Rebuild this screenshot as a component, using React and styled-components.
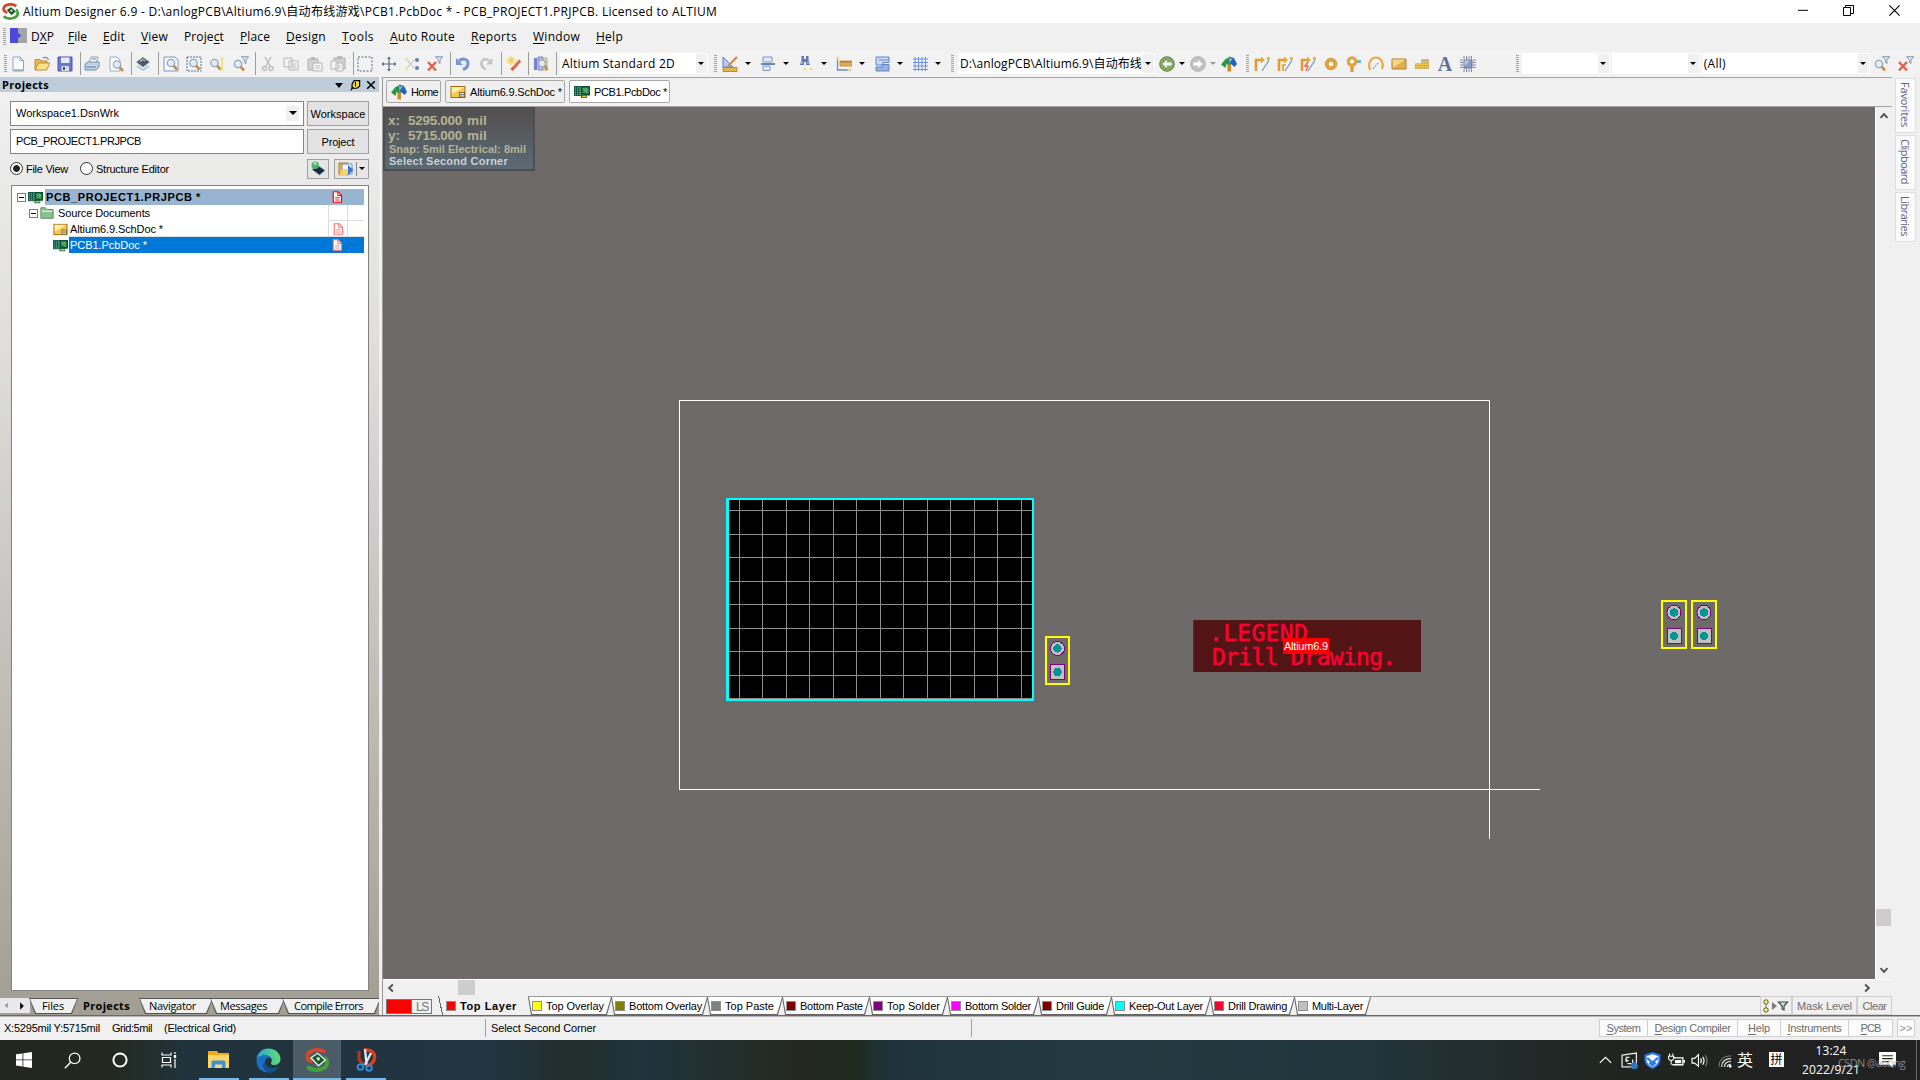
import { useLayoutEffect, useRef } from 'react'
import styled, { createGlobalStyle, css } from 'styled-components'

const ui = `'Open Sans', 'Noto Sans', 'Noto Sans CJK SC', sans-serif`
const sans = `'Liberation Sans', 'Noto Sans CJK SC', sans-serif`

const GlobalStyle = createGlobalStyle`
  * { box-sizing: border-box; }
  body { margin: 0; overflow: hidden; background: #f0f0f0; }
  svg { display: block; flex: none; }
`

// Spreads a label over the width it has in the original bitmap fonts
const Fit = ({ w, children, ...rest }) => {
  const ref = useRef(null)
  useLayoutEffect(() => {
    const el = ref.current
    el.style.letterSpacing = '0px'
    const box = el.getBoundingClientRect()
    const vertical = getComputedStyle(el).writingMode !== 'horizontal-tb'
    const natural = vertical ? box.height : box.width
    el.style.letterSpacing = `${(w - natural) / el.textContent.length}px`
  }, [w])
  return <Label ref={ref} {...rest}>{children}</Label>
}

const accel = (text) => {
  const i = text.indexOf('&')
  if (i < 0) return text
  return <>{text.slice(0, i)}<u>{text[i + 1]}</u>{text.slice(i + 2)}</>
}

/* ---------- icons ---------- */

const Ico = ({ size = 16, children, ...rest }) => (
  <svg width={size} height={size} viewBox="0 0 16 16" fill="none" {...rest}>{children}</svg>
)

const Lens = ({ x = 8, y = 8, s = 1 }) => (
  <g transform={`translate(${x} ${y}) scale(${s})`}>
    <path d="M2.8 2.8 L5.2 5.6" stroke="#d08a3c" strokeWidth="2.8" strokeLinecap="round" />
    <circle r="3.7" fill="#dceafa" stroke="#93a3bb" strokeWidth="1.2" />
    <path d="M-2 -.5 A2.2 2.2 0 0 1 .3 -2.2" stroke="#fff" />
  </g>
)

const Funnel = ({ x = 8, y = 0, stroke = '#7d92ad' }) => (
  <path transform={`translate(${x} ${y})`} d="M.5 .7 H7.6 L5 4 V7.6 L3.4 6.4 V4 Z" fill="#dbe6f2" stroke={stroke} strokeWidth=".9" />
)

const BoardIcon = (p) => (
  <Ico {...p}>
    <path d="M0 2 H16 V11.500 H13 V14 H7 V12 H0 Z" fill="#145c4a" />
    <path d="M1 4 H7 M1 6.200 H7 M1 8.400 H7 M1 10.500 H7" stroke="#7fc79a" />
    <path d="M2.500 3 V11 M4.700 3 V11" stroke="#0b3f39" strokeWidth=".8" />
    <path d="M8 3 H15 V10 H8 Z" fill="#2f8f4e" stroke="#07372f" strokeWidth=".8" />
    <path d="M9 4.500 L13.500 9 M11.500 4 L14 6.500" stroke="#9ad96c" />
    <path d="M8 12.500 H12.500" stroke="#d9d338" strokeWidth="1.600" />
  </Ico>
)

const SchIcon = (p) => (
  <Ico {...p}>
    <rect x="1" y="2.5" width="14" height="11" fill="#f7ca4d" stroke="#a46b13" />
    <path d="M1.5 3 H14 L2 10 Z" fill="#fff0a8" />
    <rect x="9.5" y="8.5" width="5" height="4.5" fill="#f8e4a0" stroke="#7a4f12" strokeWidth=".8" />
    <path d="M10 10.7 H14" stroke="#436fb8" />
  </Ico>
)

const HomeIcon = (p) => (
  <Ico {...p}>
    <path d="M6.500 5 H10 V15.500 H6.500 Z" fill="#c98a25" />
    <path d="M0 8.500 L4.500 3 L9 1 L8 9 L5.500 8 L4.500 12 Z" fill="#2e9a35" />
    <path d="M8 .5 L13 2 L16 8 L13.500 11 L10.500 8.500 L7 6 Z" fill="#2463bd" />
    <path d="M8 1.500 L12 3 L8 7 Z" fill="#6fc0a0" />
  </Ico>
)

const LogoIcon = (p) => (
  <Ico {...p}>
    <path d="M13.500 3 C9 -.5 1.500 1.800 1.500 5.500 C1.500 7.500 3 8.500 5 9" stroke="#d8462c" strokeWidth="2.600" />
    <path d="M1.500 12.500 C6 16.500 15 14.500 14.800 9.500 C14.700 8 14 7 13 6.300" stroke="#3fa33a" strokeWidth="2.600" />
    <path d="M4 6.500 L8.500 3.500 L13.500 8 L9 11.800 Z" fill="#17582b" stroke="#e6efe0" strokeWidth=".9" />
    <path d="M7.500 6.500 L9.500 6 L10 8 L8.500 8.500 Z" fill="#d5f0c5" />
  </Ico>
)

const RouteBase = () => (
  <>
    <path d="M2 15 V4 H8" stroke="#e29a31" strokeWidth="2.6" />
    <path d="M7 .5 L11 4 L7 7.500 Z" fill="#e9a83e" />
    <path d="M14.500 1 V5 L8 15" stroke="#6d95da" strokeWidth="1.200" />
    <circle cx="14.300" cy="2.500" r="1.700" fill="#eab33e" />
  </>
)

const icons = {
  new: <Ico><path d="M3 1 H10 L13.500 4.500 V15 H3 Z" fill="#fbfdff" stroke="#8fa6c2" /><path d="M10 1 V4.500 H13.500" stroke="#8fa6c2" /><path d="M4 14 H13" stroke="#6b86ab" /></Ico>,
  open: <Ico><path d="M1 14 V3.500 H6 L7 5 H13 V8" fill="#e8b957" stroke="#c58b2f" /><path d="M1 14 L4.500 7 H16 L12.500 14 Z" fill="#ffdf8c" stroke="#c58b2f" /><path d="M9 2 Q13 0 14.500 4" stroke="#5c89bd" strokeWidth="1.200" /></Ico>,
  save: <Ico><path d="M1 1 H15 V15 H1 Z" fill="#6c74d4" stroke="#4f56a8" /><path d="M4 1.500 H12.500 V7 H4 Z" fill="#e7ecfb" /><path d="M4.500 10 H12 V15 H4.500 Z" fill="#d9dce8" /><path d="M6 11 H8 V14 H6Z" fill="#4a4f87" /></Ico>,
  print: <Ico><path d="M5 7 L7 1 H14 L12 7" fill="#fff" stroke="#8aa0bd" /><path d="M1 8 L4 6 H15 V11 L12 14 H1 Z" fill="#c3d3e6" stroke="#6f8cb0" /><path d="M2 11 H12 M7.500 3 H12" stroke="#5e7fa8" /></Ico>,
  preview: <Ico><path d="M2 1 H9 L12 4 V15 H2 Z" fill="#fff" stroke="#9aaec6" /><Lens x={9} y={8.500} /></Ico>,
  chip: <Ico><path d="M2 9 L8 13 L14 9 V11 L8 15 L2 11 Z" fill="#a9c1d9" /><path d="M1.500 6 L8 1.500 L14.500 6 L8 11 Z" fill="#4a5768" stroke="#8797a9" /><path d="M5 5.500 L8 3.500 L10 5" stroke="#e5edf5" /></Ico>,
  zoomDoc: <Ico><path d="M1 1 H12 L15 4 V15 H1 Z" fill="#f5f9ff" stroke="#7f97b6" /><Lens x={8} y={7} /></Ico>,
  zoomArea: <Ico><path d="M1 1 H15 V15 H1 Z" stroke="#54719b" strokeDasharray="2 1" /><Lens x={7.500} y={7} /></Ico>,
  zoomPts: <Ico><Lens x={5.500} y={7} /><path d="M13 2 V5 M13 7 V10 M13 12 V14" stroke="#f0e38c" strokeWidth="2.400" strokeLinecap="round" /></Ico>,
  zoomFilter: <Ico><Lens x={5} y={8} /><Funnel /></Ico>,
  cut: <Ico><path d="M5 1 L10 10 M11 1 L6 10" stroke="#bdbdbd" strokeWidth="1.500" /><circle cx="4.500" cy="12.500" r="2" stroke="#bdbdbd" strokeWidth="1.400" /><circle cx="11" cy="12.500" r="2" stroke="#bdbdbd" strokeWidth="1.400" /></Ico>,
  copy: <Ico><path d="M1 2 H9 V11 H1 Z M6 5 H15 V14 H6 Z" fill="#f2f2f2" stroke="#b8b8b8" /><path d="M8 8 H13 M8 10 H13 M8 12 H13" stroke="#c4c4c4" /></Ico>,
  paste: <Ico><path d="M1 3 H11 V14 H1 Z" fill="#d2d2d2" stroke="#b4b4b4" /><path d="M4 1 H8 V4 H4 Z" fill="#b8b8b8" /><path d="M6 7 H15 V15 H6 Z" fill="#f4f4f4" stroke="#b8b8b8" /><path d="M8 10 H13 M8 12 H13" stroke="#c4c4c4" /></Ico>,
  pasteMulti: <Ico><path d="M4 2 H15 V13 H4 Z" fill="#d2d2d2" stroke="#b4b4b4" /><path d="M7 0 H12 V3 H7 Z" fill="#b8b8b8" /><path d="M1 5 H8 V13 H1 Z M6 7 H13 V15 H6 Z" fill="#f4f4f4" stroke="#b8b8b8" /><path d="M8 10 H11 M8 12 H11" stroke="#c4c4c4" /></Ico>,
  select: <Ico><path d="M1 1 H15 V15 H1 Z" stroke="#4e6690" strokeDasharray="2 1.500" /></Ico>,
  move: <Ico><path d="M8 1.500 V14.500 M1.500 8 H14.500" stroke="#5a6c87" strokeWidth="1.200" /><path d="M6 3 L8 .5 L10 3 Z M6 13 L8 15.500 L10 13 Z M3 6 L.5 8 L3 10 Z M13 6 L15.500 8 L13 10 Z" fill="#5a6c87" /></Ico>,
  deselect: <Ico><path d="M2 3 L10 12 M10 4 L3 12" stroke="#8d99ac" strokeDasharray="1.500 1" /><circle cx="2.500" cy="3" r="1.800" fill="#f2e58a" /><circle cx="2.500" cy="12.500" r="1.800" fill="#f2e58a" /><circle cx="13" cy="4" r="2" fill="#667ea6" /><circle cx="13" cy="12" r="2" fill="#667ea6" /></Ico>,
  clearFilter: <Ico><path d="M1 6 L9 14.500 M9 6 L1 14.500" stroke="#e0604b" strokeWidth="2.400" /><Funnel /></Ico>,
  undo: <Ico><path d="M4 5 C8 1.500 13.500 3 13 8 C12.700 10.500 11 12.500 8 13.500" stroke="#7297d8" strokeWidth="3" /><path d="M1 2 V9 H8 Z" fill="#7297d8" /></Ico>,
  redo: <Ico><path d="M11.500 5 C7 1.500 2.500 4 3.500 8.500 C4 11 6 12.500 8 13.500" stroke="#c3c3c3" strokeWidth="2.400" /><path d="M14.500 2 V8.500 H8 Z" fill="#c3c3c3" /></Ico>,
  wand: <Ico><path d="M14 4.500 L5.500 14" stroke="#e2593c" strokeWidth="3" /><path d="M13.500 3.500 L7 11" stroke="#f4a287" /><path d="M5 0 V9 M.5 4.500 H9.500 M2 1.500 L8 7.500 M8 1.500 L2 7.500" stroke="#f3cf55" strokeWidth="1.100" /></Ico>,
  browse: <Ico><path d="M1 2 H4 V14 H1 Z" fill="#777fca" /><path d="M5 1 H10 V14 H5 Z" fill="#b4bce6" stroke="#7d86bd" /><path d="M10 2 H14 V14 H10 Z" fill="#e9ddb0" stroke="#b6a674" /><Lens x={9} y={7.500} s={.95} /></Ico>,
  draw: <Ico><path d="M1 1 V11 H11 Z" fill="#b8cdf1" stroke="#5d7fc0" /><path d="M15 1 L6 10" stroke="#cf8a4a" strokeWidth="2.200" /><path d="M1 11.500 H15 V15.500 H1 Z" fill="#e5b545" stroke="#a97b22" strokeWidth=".8" /></Ico>,
  align: <Ico><path d="M3 1 H12 V6 H3 Z" fill="#dfe9fa" stroke="#8197c2" /><path d="M1 8 H15" stroke="#4a69a8" strokeWidth="1.600" /><path d="M3 10 H10 V14.500 H3 Z" fill="#dfe9fa" stroke="#8197c2" /></Ico>,
  find: <Ico><path d="M3.500 0 H6 V3 H8 V0 H10.500 V4 L12 9 H8 V6 H6 V9 H2 L3.500 4 Z" fill="#5f78ad" /><path d="M4 5.500 V8 M10 5.500 V8" stroke="#d3def3" /><circle cx="7" cy="13" r="1.600" fill="#efe28a" /><circle cx="13" cy="13" r="1.600" fill="#efe28a" /></Ico>,
  dims: <Ico><path d="M1.500 2 V14 H15" stroke="#6d8bc4" strokeWidth="1.300" /><path d="M4 5 H16 V10 H4 Z" fill="#e3b14b" stroke="#b98530" strokeWidth=".8" /><path d="M6 5 V7 M8 5 V7 M10 5 V7 M12 5 V7 M14 5 V7" stroke="#815a18" strokeWidth=".7" /><circle cx="2" cy="2" r="1.500" fill="#f2e06b" /><circle cx="13" cy="14" r="1.500" fill="#f2e06b" /></Ico>,
  rooms: <Ico><path d="M2 1 H15 V6.500 H9 V9 H2 Z" fill="#c9daf6" stroke="#6486c4" /><path d="M2 15 V11 H8 V8.500 H15 V15 Z" fill="#94b3e6" stroke="#6486c4" /><path d="M5 4 H15" stroke="#6486c4" /></Ico>,
  grid: <Ico><path d="M3 1 V15 M6.500 1 V15 M10 1 V15 M13.500 1 V15 M1 3 H16 M1 6.500 H16 M1 10 H16 M1 13.500 H16" stroke="#6a92dc" /></Ico>,
  back: <Ico><circle cx="8" cy="8" r="7.300" fill="#82a963" stroke="#68864e" /><path d="M3.500 8 L8 4 V6.500 H12.500 V9.500 H8 V12 Z" fill="#fff" /></Ico>,
  forward: <Ico><circle cx="8" cy="8" r="7.300" fill="#c2c2c2" stroke="#ababab" /><path d="M12.500 8 L8 4 V6.500 H3.500 V9.500 H8 V12 Z" fill="#fff" /></Ico>,
  home: <HomeIcon />,
  route: <Ico><RouteBase /></Ico>,
  routeDiff: <Ico><RouteBase /><path d="M6 15 V9 H9" stroke="#e29a31" strokeWidth="1.600" /></Ico>,
  routeSmart: <Ico><RouteBase /><path d="M8 6 L5 10 H8 L6 15" stroke="#ea6a55" strokeWidth="1.500" /></Ico>,
  pad: <Ico><circle cx="8" cy="8" r="4" stroke="#e3a43a" strokeWidth="3.600" fill="#fff" /><circle cx="8" cy="8" r="5.800" stroke="#c4872d" strokeWidth=".7" /></Ico>,
  via: <Ico><path d="M7 9 V16" stroke="#dd9c37" strokeWidth="3.200" /><path d="M10 4 H16.500 V7 H10Z" fill="#6bb6d8" /><circle cx="7" cy="5.500" r="3.700" stroke="#e3a43a" strokeWidth="3.200" fill="#fff" /></Ico>,
  arc: <Ico><path d="M2 14 C-1 5 5 1.500 8 1.500 C12 1.500 16.500 6 14 13" stroke="#e8a845" strokeWidth="2.200" /><path d="M5 13 L11 6" stroke="#7a9fe0" strokeWidth="1.200" strokeDasharray="2 1" /></Ico>,
  fill: <Ico><path d="M1 3 H15 V13 H1 Z" fill="#e4ae4c" stroke="#ae7f33" /><path d="M1.500 3.500 H14 L2 12 Z" fill="#f7d488" /></Ico>,
  poly: <Ico><path d="M1 7 H7 V3 H15 V13 H1 Z" fill="#ecc34c" /><path d="M1 9.500 H15 M1 12 H15 M8 7 H15 M8 4.500 H15" stroke="#7c8c9e" strokeWidth=".8" strokeDasharray="1.200 1" /></Ico>,
  part: <Ico><path d="M4 0 V16 M6.500 0 V16 M9 0 V16 M11.500 0 V16 M0 4 H16 M0 6.500 H16 M0 9 H16 M0 11.500 H16" stroke="#707a91" strokeWidth=".9" /><path d="M3 3 H13 V13 H3 Z" fill="#f2f2f2" /><path d="M4 4 H12 V12 H4 Z" fill="#8a9dc6" stroke="#5f6f96" /><path d="M4.500 4.500 H10 L4.500 10 Z" fill="#bccae6" /></Ico>
}

const RedDoc = ({ color }) => (
  <Ico size={12}>
    <path d="M3 1 H9.500 L14 5.500 V15 H3 Z" fill="#fff" stroke={color} strokeWidth="1.600" />
    <path d="M9 1 V6 H14 M5.500 9 H11.500 M5.500 12 H11.500" stroke={color} strokeWidth="1.300" />
  </Ico>
)

/* ---------- data ---------- */

const menu = [
  ['D&XP', 37, 23], ['&File', 35, 19], ['&Edit', 38, 22], ['&View', 43, 27], ['Proje&ct', 56, 40],
  ['&Place', 46, 30], ['&Design', 56, 40], ['&Tools', 48, 32], ['&Auto Route', 81, 65],
  ['&Reports', 62, 46], ['&Window', 63, 47], ['&Help', 50, 27]
]

const mainTools = ['new', 'open', 'save', '|', 'print', 'preview', '|', 'chip', '|', 'zoomDoc', 'zoomArea', 'zoomPts', 'zoomFilter', '|',
  'cut', 'copy', 'paste', 'pasteMulti', '|', 'select', 'move', 'deselect', 'clearFilter', '|', 'undo', 'redo', '|', 'wand', '|', 'browse', '|']
const dropTools = ['draw', 'align', 'find', 'dims', 'rooms', 'grid']
const placeTools = ['route', 'routeDiff', 'routeSmart', 'pad', 'via', 'arc', 'fill', 'poly', 'text', 'part']

// label, swatch, tab width, label width
const layers = [
  ['Top Overlay', '#ffff00', 83, 58], ['Bottom Overlay', '#808000', 96, 73], ['Top Paste', '#808080', 75, 49],
  ['Bottom Paste', '#800000', 87, 63], ['Top Solder', '#800080', 78, 53], ['Bottom Solder', '#ff00ff', 91, 66],
  ['Drill Guide', '#800000', 73, 48], ['Keep-Out Layer', '#00ffff', 99, 74], ['Drill Drawing', '#ff0030', 84, 59],
  ['Multi-Layer', '#c0c0c0', 76, 51]
]

const panelTabs = [['Files', 46, 22, 12], ['Projects', 64, 47, 7], ['Navigator', 71, 47, 9], ['Messages', 72, 47, 9], ['Compile Errors', 96, 69, 11]]
const panelButtons = [['&System', 48, 34], ['&Design Compiler', 90, 76], ['&Help', 43, 22], ['&Instruments', 68, 54], ['&PCB', 44, 20]]

const gridX = [739, 762, 786, 809, 833, 856, 880, 903, 927, 950, 974, 997, 1021]
const gridY = [510, 534, 557, 581, 604, 628, 651, 675, 698]

/* ---------- canvas ---------- */

const Header2 = ({ x, y, w = 25 }) => (
  <g transform={`translate(${x} ${y})`}>
    <rect x="1" y="1" width={w - 2} height="47" stroke="#ffff00" strokeWidth="2" fill="none" />
    <circle cx={w / 2} cy="12.500" r="7" fill="#c0c0c0" stroke="#800080" />
    <circle cx={w / 2} cy="12.500" r="4.200" fill="#009595" />
    <rect x={w / 2 - 7} y="28.500" width="14" height="15" fill="#c0c0c0" stroke="#800080" />
    <circle cx={w / 2} cy="36" r="4.200" fill="#009595" />
  </g>
)

const PcbCanvas = () => (
  <svg width="1492" height="872" viewBox="383 107 1492 872" shapeRendering="crispEdges">
    <rect x="726" y="498" width="308" height="203" fill="#00ffff" />
    <rect x="729" y="500" width="303" height="199" fill="#000" />
    {gridX.map((x) => <rect key={x} x={x} y="500" width="1" height="199" fill="#918d8b" />)}
    {gridY.map((y) => <rect key={y} x="729" y={y} width="303" height="1" fill="#918d8b" />)}
    <Header2 x={1045} y={636} />
    <Header2 x={1661} y={600} w={26} />
    <Header2 x={1691} y={600} w={26} />
    <rect x="1193" y="620" width="228" height="52" fill="#521414" />
    <path d="M1193.500 620 V672" stroke="#1d4545" />
    <LegendText x="1209" y="641" $gap=".3px">.LEGEND</LegendText>
    <LegendText x="1212" y="665" $gap="-.75px">Drill Drawing.</LegendText>
    <rect x="1283" y="638" width="46" height="16" fill="#ff0000" />
    <RoomText x="1284" y="650" textLength="44">Altium6.9</RoomText>
    <path d="M679.500 400.500 H1489.500 M679.500 400 V789.500 M679 789.500 H1540 M1489.500 400 V839" stroke="#fff" fill="none" />
  </svg>
)

/* ---------- parts ---------- */

const ToolRow = ({ names, w }) => names.map((n, i) => (
  n === '|' ? <Sep key={i} /> : <Slot key={i} $w={w}>{n === 'text' ? <TextTool>A</TextTool> : icons[n]}</Slot>
))

const Toolbar = () => (
  <ToolBar>
    <Grip $ml={3.7} />
    <ToolRow names={mainTools} />
    <Combo $w={148} $ml={3}><Fit w={113}>Altium Standard 2D</Fit><ComboArrow><Caret /></ComboArrow></Combo>
    <Grip $ml={6} />
    {dropTools.map((n) => (
      <DropSlot key={n}>{icons[n]}<Caret /></DropSlot>
    ))}
    <Grip $ml={6.5} />
    <Combo $w={197} $ml={3.5}><Fit w={182}>D:\anlogPCB\Altium6.9\自动布线</Fit><ComboArrow><Caret /></ComboArrow></Combo>
    <NavSlot>{icons.back}<Caret /></NavSlot>
    <NavSlot>{icons.forward}<Caret $dim /></NavSlot>
    <Slot>{icons.home}</Slot>
    <Grip $ml={5.7} />
    <PlaceGroup><ToolRow names={placeTools} w={22.9} /></PlaceGroup>
    <Grip $ml={36.5} />
    <Combo $w={88} $ml={3}><ComboArrow><Caret /></ComboArrow></Combo>
    <Combo $w={88} $ml={2}><ComboArrow><Caret /></ComboArrow></Combo>
    <Combo $w={168} $ml={2}><Fit w={22}>(All)</Fit><ComboArrow><Caret /></ComboArrow></Combo>
    <Slot $ml={1}>{icons.zoomFilter}</Slot>
    <Slot>{icons.clearFilter}</Slot>
  </ToolBar>
)

const ProjectsPanel = () => (
  <Panel>
    <PanelHead>
      <Fit w={47}>Projects</Fit>
      <HeadCaret $big />
      <Ico size={11}><path d="M6 1 H14 V9 L10 12 H3 V6 Z" fill="#efe04a" stroke="#000" strokeWidth="1.800" /><path d="M1 15 L5 10 M8 3 V9" stroke="#000" strokeWidth="1.600" /></Ico>
      <Ico size={10}><path d="M2 2 L14 14 M14 2 L2 14" stroke="#000" strokeWidth="2.600" /></Ico>
    </PanelHead>
    <PanelBody>
      <Line>
        <Field><Fit w={103}>Workspace1.DsnWrk</Fit><FieldArrow><Caret $big /></FieldArrow></Field>
        <Push><Fit w={55}>Workspace</Fit></Push>
      </Line>
      <Line>
        <Field><Fit w={125}>PCB_PROJECT1.PRJPCB</Fit></Field>
        <Push><Fit w={33}>Project</Fit></Push>
      </Line>
      <RadioLine>
        <Radio $on /><RadioLabel $w={57}><Fit w={42}>File View</Fit></RadioLabel>
        <Radio /><RadioLabel $w={211}><Fit w={73}>Structure Editor</Fit></RadioLabel>
        <IconPush $w={22}>
          <Ico size={15}><path d="M1 9 L8 5 L15 10 L9 15 Z" fill="#1d2b3c" stroke="#89a8c6" /><circle cx="4.500" cy="4.500" r="4" fill="#52b36c" /><path d="M2 3 L5 1 L6 4 Z" fill="#cde9ff" /></Ico>
        </IconPush>
        <IconPush $w={35}>
          <Ico><path d="M1 2 H10 V14 H1 Z" fill="#e9b64c" stroke="#b57f21" /><path d="M4 3 H14 V13 H4 Z" fill="#f5faff" stroke="#6a90c4" /><path d="M10 4 L15.500 9 L10 14 Z" fill="#3577d8" /><path d="M1 15 L4 8 H10 L9 15 Z" fill="#f6d072" /></Ico>
          <PushSplit /><Caret />
        </IconPush>
      </RadioLine>
      <Tree>
        <TreeRow $pad={4}>
          <Minus /><TreeIcon $w={19}><BoardIcon size={15} /></TreeIcon>
          <TreeName $bold $bg="#99b4d1"><Fit w={155}>PCB_PROJECT1.PRJPCB *</Fit></TreeName>
          <TreeCell $bg="#99b4d1" $w={19}><RedDoc color="#f00" /></TreeCell><TreeCell $bg="#99b4d1" $w={17} />
        </TreeRow>
        <TreeRow $pad={16}>
          <Minus /><TreeIcon $w={19}><Ico size={14}><path d="M1 14 V2 H6 L8 4 H15 V14 Z" fill="#8cc08d" stroke="#4f8053" /><path d="M2 6 H14" stroke="#cbe8c9" strokeWidth="2" /></Ico></TreeIcon>
          <TreeName><Fit w={92}>Source Documents</Fit></TreeName>
          <TreeCell $line $w={19} /><TreeCell $line $w={17} />
        </TreeRow>
        <TreeRow $pad={38}>
          <TreeIcon $w={18}><SchIcon size={15} /></TreeIcon>
          <TreeName $line><Fit w={93}>Altium6.9.SchDoc *</Fit></TreeName>
          <TreeCell $line $w={19}><RedDoc color="#f77" /></TreeCell><TreeCell $line $w={17} />
        </TreeRow>
        <TreeRow $pad={38}>
          <TreeIcon $w={18}><BoardIcon size={15} /></TreeIcon>
          <TreeName $bg="#0078d7" $light><Fit w={77}>PCB1.PcbDoc *</Fit></TreeName>
          <TreeCell $bg="#0078d7" $w={19}><RedDoc color="#f77" /></TreeCell><TreeCell $bg="#0078d7" $w={17} />
        </TreeRow>
      </Tree>
    </PanelBody>
    <PanelTabs>
      <TabArrows>
        <Ico size={9}><path d="M10 3 L5 8 L10 13 Z" fill="#8c8c8c" /></Ico>
        <Ico size={10}><path d="M5 2 L11 8 L5 14 Z" fill="#000" /></Ico>
      </TabArrows>
      {panelTabs.map(([name, w, tw, pad]) => (
        <PanelTab key={name} $w={w} $pad={pad} $active={name === 'Projects'}><Fit w={tw}>{name}</Fit></PanelTab>
      ))}
    </PanelTabs>
  </Panel>
)

const Chevron = ({ d = 'M2.500 11 L8 5 L13.500 11' }) => (
  <Ico size={10}><path d={d} stroke="#505050" strokeWidth="3" /></Ico>
)

const Editor = () => (
  <EditorBox>
    <DocTabs>
      <DocTab $w={55}><HomeIcon /><Fit w={27}>Home</Fit></DocTab>
      <DocTab $w={120}><SchIcon /><Fit w={92}>Altium6.9.SchDoc *</Fit></DocTab>
      <DocTab $w={101} $active><BoardIcon /><Fit w={73}>PCB1.PcbDoc *</Fit></DocTab>
    </DocTabs>
    <Stage>
      <CanvasArea>
        <PcbCanvas />
        <Hud>
          <HudBig><HudKey>x:</HudKey><Fit w={54}>5295.000</Fit><Fit w={20}>mil</Fit></HudBig>
          <HudBig><HudKey>y:</HudKey><Fit w={54}>5715.000</Fit><Fit w={20}>mil</Fit></HudBig>
          <HudSmall><Fit w={137}>Snap: 5mil Electrical: 8mil</Fit></HudSmall>
          <HudSmall $light><Fit w={119}>Select Second Corner</Fit></HudSmall>
        </Hud>
      </CanvasArea>
      <VScroll>
        <Chevron />
        <Spacer />
        <Thumb $w={15} $h={17} />
        <ThumbGap />
        <Chevron d="M2.500 5 L8 11 L13.500 5" />
      </VScroll>
    </Stage>
    <HScroll>
      <Chevron d="M11 2.500 L5 8 L11 13.500" />
      <Thumb $w={17} $h={15} $ml={62} />
      <Spacer />
      <Chevron d="M5 2.500 L11 8 L5 13.500" />
    </HScroll>
    <LayerBar>
      <LayerSet><i /><b><Fit w={12}>LS</Fit></b></LayerSet>
      <ActiveLayer><Swatch $c="#ff0000" /><Fit w={57}>Top Layer</Fit></ActiveLayer>
      {layers.map(([name, c, w, tw]) => (
        <LayerTab key={name} $w={w}><Swatch $c={c} /><Fit w={tw}>{name}</Fit></LayerTab>
      ))}
      <LayerRest />
      <MaskButton $w={32}>
        <svg width="26" height="14" viewBox="0 0 26 14">
          <path d="M3 3 V11" stroke="#777" />
          <circle cx="3" cy="3" r="2.200" fill="#ffff40" stroke="#555" />
          <circle cx="3" cy="11" r="2.200" fill="#ffff40" stroke="#555" />
          <path d="M9 3 L14 7 L9 11 Z" fill="#7d7d7d" />
          <path d="M15.500 3 H24.500 L21 7 V11 L19 10 V7 Z" fill="#cfe6e6" stroke="#444" strokeWidth="1.200" />
        </svg>
      </MaskButton>
      <MaskButton $w={65}><Fit w={55}>Mask Level</Fit></MaskButton>
      <MaskButton $w={35}><Fit w={24}>Clear</Fit></MaskButton>
    </LayerBar>
  </EditorBox>
)

const Taskbar = () => (
  <TaskBar>
    <Task $w={48}><svg width="16" height="16" viewBox="0 0 16 16"><path d="M0 2.300 L6.500 1.400 V7.500 H0Z M7.300 1.300 L16 0 V7.500 H7.300Z M0 8.300 H6.500 V14.500 L0 13.600Z M7.300 8.300 H16 V16 L7.300 14.700Z" fill="#fff" /></svg></Task>
    <Task $w={48}><Ico size={17}><circle cx="10" cy="6" r="5" stroke="#fff" strokeWidth="1.200" /><path d="M6.500 9.500 L.8 15.200" stroke="#fff" strokeWidth="1.300" /></Ico></Task>
    <Task $w={48}><Ico><circle cx="8" cy="8" r="6.600" stroke="#fff" strokeWidth="2" /></Ico></Task>
    <Task $w={50}><Ico><path d="M1 .5 V3 H10 V.5 M1 15.500 V13 H10 V15.500 M1.500 5.500 H9.500 V10.500 H1.500 Z M14 0 V2 M14 7 V16" stroke="#fff" strokeWidth="1.200" /><path d="M12.800 3 H15.200 V6 H12.800 Z" fill="#fff" /></Ico></Task>
    <Task $w={50} $bar>
      <svg width="22" height="20" viewBox="0 0 22 20"><path d="M0 1 H9 L10.500 3 H21 V18 H0 Z" fill="#f2a91c" /><path d="M0 5 H21 V18 H0 Z" fill="#fcd667" /><path d="M3.500 18 V12 Q3.500 10.500 5 10.500 H16 Q17.500 10.500 17.500 12 V18 H14 V14.500 H7 V18 Z" fill="#3d92d8" /></svg>
    </Task>
    <Task $w={49} $bar>
      <svg width="25" height="25" viewBox="0 0 25 25">
        <defs><linearGradient id="eg" x1="0" y1=".4" x2="1" y2=".3"><stop stopColor="#2aa3df" /><stop offset="1" stopColor="#5fe06b" /></linearGradient></defs>
        <path d="M.5 12 C1 5 6 .5 12.500 .5 C20 .5 24.500 6 24.500 11 C24.500 15 21 17 18 17 C15 17 14.500 15.500 15.500 14 C17 10 13 7.500 9.500 7.500 C5 7.500 1.500 9.500 .5 12 Z" fill="url(#eg)" />
        <path d="M.5 12 C2 8 6 7.500 9.500 7.500 C12 7.500 14 8.500 15 10 C11 9 9 11 9 14 C9 18 13 22 21 19.500 C19 22.500 16 24.500 12.500 24.500 C5 24.500 0 19 .5 12 Z" fill="#1a6fc0" />
        <path d="M9 14 C9 18 13 22 21 19.500 C22 19 23 19 22 20 C19 23.500 15 25 12 24.300 C7 22 5 16 9 14Z" fill="#134f93" />
      </svg>
    </Task>
    <Task $w={48} $bar $active><LogoIcon size={24} /></Task>
    <Task $w={50} $bar>
      <svg width="22" height="24" viewBox="0 0 22 24" fill="none"><path d="M9 2 H12 C17 2 20 5 19.500 10 C19 14 16 17 11 18" stroke="#d6401e" strokeWidth="3.400" /><path d="M4 3 V11 C5 14 8 16 9.500 16" stroke="#b8361c" strokeWidth="3" /><path d="M10 1 L11.500 16 M16 5 L10 17" stroke="#dfe5ec" strokeWidth="2.400" /><circle cx="5.500" cy="19" r="2.800" stroke="#2a8bd6" strokeWidth="2" /><circle cx="14" cy="20" r="2.800" stroke="#2a8bd6" strokeWidth="2" /></svg>
    </Task>
    <Spacer />
    <TraySlot $w={24}><Ico size={13}><path d="M1 11 L8 4 L15 11" stroke="#fff" strokeWidth="1.500" /></Ico></TraySlot>
    <TraySlot $w={24}><Ico size={17}><path d="M1 3 L14.500 1 V14 H1 Z" stroke="#e8e8e8" strokeWidth="1.200" /><path d="M5 9 V5 H8 M11 7 V11 H6 M4 7 L5.500 9 L7 7.500" stroke="#e8e8e8" strokeWidth="1.200" /><circle cx="12.500" cy="13" r="3.300" fill="#2f78c4" /></Ico></TraySlot>
    <TraySlot $w={23}><Ico size={17}><path d="M8 0 L15.500 2.500 V8 Q15 13 8 16 Q1 13 .5 8 V2.500 Z" fill="#2a7cf2" /><path d="M8 2 L13.500 4 V8 Q13 12 8 14 Q3 12 2.500 8 V4Z" fill="#fff" /><path d="M3 5.500 L8 10 L13 5.500 M5 10 L8 12.500 L11 10" stroke="#2a7cf2" strokeWidth="2" /></Ico></TraySlot>
    <TraySlot $w={24}><Ico size={17}><path d="M5 5.500 H14 V12 H4" stroke="#fff" strokeWidth="1.200" /><path d="M6.500 7.500 H12.500 V10.500 H6.500Z M14.500 7.500 H16 V10 H14.500Z" fill="#fff" /><path d="M1.500 1.500 V4 M4.500 1.500 V4 M.5 4 H5.500 V6 Q5 8 3 8 Q1 8 .5 6 Z M3 8 V12" stroke="#fff" /></Ico></TraySlot>
    <TraySlot $w={23}><Ico size={17}><path d="M1 6 H3.500 L7 2.500 V13.500 L3.500 10.500 H1 Z" stroke="#fff" strokeWidth="1.100" /><path d="M9 6 Q10.500 8 9 10.500 M11 4.500 Q13.500 8 11 12" stroke="#fff" strokeWidth="1.100" /><path d="M13.500 3 Q16.800 8 13.500 13.500" stroke="#888" /></Ico></TraySlot>
    <TraySlot $w={26}><Ico size={15} viewBox="0 0 16 16"><path d="M2 15 Q2 3 15 3" stroke="#888" /><path d="M5 15 Q5 6 15 6 M8 15 Q8 9 15 9 M11 15 Q11 12 15 12" stroke="#ddd" strokeWidth="1.300" /><circle cx="14" cy="14.200" r="1.500" fill="#fff" /></Ico></TraySlot>
    <Ime>英</Ime>
    <ImeBox>拼</ImeBox>
    <Clock>
      <Fit w={31}>13:24</Fit>
      <Fit w={58}>2022/9/21</Fit>
    </Clock>
    <Notice>
      <Ico size={17}><path d="M0 1 H16 V13 H13 V16 L10 13 H0 Z" fill="#fff" /><path d="M3 4.500 H13 M3 7.200 H13 M3 10 H9" stroke="#222" strokeWidth="1.100" /></Ico>
      <Watermark><Fit w={67}>CSDN @aobng</Fit></Watermark>
    </Notice>
    <DesktopEdge />
  </TaskBar>
)

const App = () => {
  return (
    <Screen>
      <GlobalStyle />
      <TitleBar>
        <LogoIcon size={17} />
        <Title><Fit w={694}>Altium Designer 6.9 - D:\anlogPCB\Altium6.9\自动布线游戏\PCB1.PcbDoc * - PCB_PROJECT1.PRJPCB. Licensed to ALTIUM</Fit></Title>
        <WinButtons>
          <Ico size={10}><path d="M0 8.500 H16" stroke="#000" strokeWidth="1.600" /></Ico>
          <svg width="11" height="11" fill="none" stroke="#000"><path d="M.5 2.500 H7.500 V10.500 H.5 Z M2.500 2.500 V.5 H10.500 V8.500 H8" /></svg>
          <Ico size={11}><path d="M.5 .5 L15.500 15.500 M15.500 .5 L.5 15.500" stroke="#000" strokeWidth="1.600" /></Ico>
        </WinButtons>
      </TitleBar>
      <MenuBar>
        <Grip />
        <DxpMark><path d="M0 0 H8 V5 Q11 5 11 7.500 Q11 10 8 10 V15 H0 Z" fill="#4a4adb" /><path d="M8 0 H17 V15 H8 V10 Q11 10 11 7.500 Q11 5 8 5 Z" fill="#a4a4a8" /></DxpMark>
        {menu.map(([name, w, tw]) => <MenuItem key={name} $w={w}><Fit w={tw}>{accel(name)}</Fit></MenuItem>)}
      </MenuBar>
      <Toolbar />
      <Body>
        <ProjectsPanel />
        <Editor />
        <DockTabs>
          <DockTab $h={55}><Fit w={45}>Favorites</Fit></DockTab>
          <DockTab $h={55}><Fit w={45}>Clipboard</Fit></DockTab>
          <DockTab $h={50}><Fit w={40}>Libraries</Fit></DockTab>
        </DockTabs>
      </Body>
      <StatusBar>
        <StatusText $w={108}><Fit w={96}>X:5295mil Y:5715mil</Fit></StatusText>
        <StatusText $w={52}><Fit w={40}>Grid:5mil</Fit></StatusText>
        <StatusText $w={321}><Fit w={72}>(Electrical Grid)</Fit></StatusText>
        <StatusSep />
        <StatusText $w={480}><Fit w={105}>Select Second Corner</Fit></StatusText>
        <StatusSep />
        <Spacer />
        <StatusButtons>
          {panelButtons.map(([name, w, tw]) => <StatusButton key={name} $w={w}><Fit w={tw}>{accel(name)}</Fit></StatusButton>)}
        </StatusButtons>
        <MoreButton>&gt;&gt;</MoreButton>
      </StatusBar>
      <Taskbar />
    </Screen>
  )
}

export default App

/* ---------- styles ---------- */

const Label = styled.span`
  display: inline-block;
  flex: none;
  white-space: pre;
  u { text-underline-offset: 2px; text-decoration-thickness: 1px; }
`

const Screen = styled.div`
  width: 1920px;
  height: 1080px;
  display: flex;
  flex-direction: column;
  background: #f0f0f0;
  color: #000;
  font: 11px/14px ${sans};
`

const TitleBar = styled.div`
  height: 23px;
  display: flex;
  align-items: center;
  padding: 0 20px 0 2px;
  background: #fff;
`

const Title = styled.div`
  flex: 1;
  padding-left: 4px;
  font: 12px/20px ${ui};
`

const WinButtons = styled.div`
  display: flex;
  align-items: center;
  gap: 35px;
  padding-bottom: 3px;
`

const MenuBar = styled.div`
  height: 27px;
  display: flex;
  align-items: center;
  font: 12px/18px ${ui};
`

const DxpMark = styled.svg`
  width: 17px;
  height: 15px;
  margin: 0 4px 2px 4px;
`

const MenuItem = styled.div`
  width: ${(p) => p.$w}px;
  flex: none;
`

const Grip = styled.div`
  width: 3px;
  height: 17px;
  flex: none;
  margin-left: ${(p) => p.$ml ?? 3}px;
  background: repeating-linear-gradient(#a2a2a2 0 1px, transparent 1px 2px);
`

const ToolBar = styled.div`
  height: 27px;
  display: flex;
  align-items: center;
  background: #f2f2f2;
  font: 12px/20px ${ui};
`

const Slot = styled.div`
  width: ${(p) => p.$w ?? 23.3}px;
  height: 22px;
  margin-left: ${(p) => p.$ml ?? 0}px;
  flex: none;
  display: flex;
  align-items: center;
  justify-content: center;
`

const PlaceGroup = styled.div`
  display: flex;
  flex: none;
  padding-left: 1.5px;
`

const DropSlot = styled.div`
  width: 38px;
  flex: none;
  display: flex;
  align-items: center;
  gap: 7px;
  padding-left: 5px;
`

const NavSlot = styled.div`
  width: 31px;
  flex: none;
  display: flex;
  align-items: center;
  gap: 4px;
  padding-left: 4px;
`

const TextTool = styled.div`
  color: #5d719c;
  font: bold 20px/20px 'Liberation Serif', serif;
`

const Sep = styled.div`
  width: 4.2px;
  height: 23px;
  flex: none;
  border-right: 1px solid #9d9d9d;
`

const Caret = styled.i`
  width: 0;
  height: 0;
  flex: none;
  border: ${(p) => (p.$big ? 4 : 3)}px solid transparent;
  border-top-color: ${(p) => (p.$dim ? '#999' : '#000')};
  border-bottom: 0;
`

const HeadCaret = styled(Caret)`
  border-width: 5px 4.5px 0;
  margin-right: 2px;
`

const Combo = styled.div`
  width: ${(p) => p.$w}px;
  height: 21px;
  margin-left: ${(p) => p.$ml}px;
  flex: none;
  display: flex;
  align-items: center;
  padding: 1px 1px 1px 2px;
  background: #fff;
`

const ComboArrow = styled.div`
  width: 11px;
  height: 19px;
  margin-left: auto;
  display: flex;
  align-items: center;
  justify-content: center;
  background: #f0f0f0;
`

const Body = styled.div`
  height: 938px;
  display: flex;
`

const Panel = styled.div`
  width: 379px;
  display: flex;
  flex-direction: column;
  background: linear-gradient(#f0f0f0 2%, #dedddb 30%, #a39e94);
`

const PanelHead = styled.div`
  height: 15px;
  display: flex;
  align-items: center;
  gap: 5px;
  padding: 1px 3px 0 2px;
  background: #bfcddb;
  font: bold 11px/14px ${ui};
  ${Label} { margin-right: auto; }
`

const PanelBody = styled.div`
  flex: 1;
  display: flex;
  flex-direction: column;
  padding: 9px 10px 0;
`

const Line = styled.div`
  display: flex;
  gap: 3px;
  margin-bottom: 3px;
`

const Field = styled.div`
  width: 294px;
  height: 25px;
  display: flex;
  align-items: center;
  padding: 0 0 1px 5px;
  background: #fff;
  border: 1px solid #858585;
`

const FieldArrow = styled.div`
  width: 13px;
  height: 15px;
  margin: 0 4px 0 auto;
  display: flex;
  align-items: center;
  justify-content: center;
  background: #f0f0f0;
`

const Push = styled.div`
  width: 62px;
  height: 25px;
  display: flex;
  align-items: center;
  justify-content: center;
  border: 1px solid #a0a0a0;
  background: #e3e3e3;
`

const RadioLine = styled.div`
  height: 23px;
  display: flex;
  align-items: center;
  margin-bottom: 5px;
`

const Radio = styled.i`
  width: 13px;
  height: 13px;
  flex: none;
  border: 1px solid #333;
  border-radius: 50%;
  background: ${(p) => (p.$on ? 'radial-gradient(circle, #222 3px, #fff 3.8px)' : '#fff')};
`

const RadioLabel = styled.div`
  width: ${(p) => p.$w}px;
  flex: none;
  padding: 1px 0 0 3px;
`

const IconPush = styled.div`
  width: ${(p) => p.$w}px;
  height: 20px;
  margin-left: 3px;
  flex: none;
  display: flex;
  align-items: center;
  justify-content: center;
  gap: 2px;
  border: 1px solid #a0a0a0;
  background: #e6e6e6;
  & + & { margin-left: 5px; }
`

const PushSplit = styled.i`
  width: 1px;
  height: 14px;
  background: #888;
`

const Tree = styled.div`
  height: 806px;
  margin-left: 1px;
  padding: 3px 4px 0 1px;
  border: 1px solid #828282;
  background: #fff;
`

const TreeRow = styled.div`
  height: 16px;
  display: flex;
  align-items: center;
  padding-left: ${(p) => p.$pad}px;
`

const Minus = styled.i`
  width: 9px;
  height: 9px;
  flex: none;
  border: 1px solid #7d7d7d;
  background: linear-gradient(#000, #000) center / 5px 1px no-repeat #fff;
`

const TreeIcon = styled.div`
  width: ${(p) => p.$w}px;
  flex: none;
  padding-left: 2px;
`

const cell = css`
  height: 16px;
  background: ${(p) => p.$bg ?? 'transparent'};
  border-bottom: ${(p) => (p.$line ? '1px solid #dcdcdc' : 0)};
`

const TreeName = styled.div`
  ${cell}
  flex: 1;
  padding: 1px 0 0 1px;
  color: ${(p) => (p.$light ? '#fff' : '#000')};
  font-weight: ${(p) => (p.$bold ? 700 : 400)};
`

const TreeCell = styled.div`
  ${cell}
  width: ${(p) => p.$w}px;
  flex: none;
  display: flex;
  align-items: center;
  padding-left: 3px;
  border-left: ${(p) => (p.$line ? '1px solid #dcdcdc' : 0)};
`

const PanelTabs = styled.div`
  height: 17px;
  display: flex;
  overflow: hidden;
  font: 11px/15px ${ui};
`

const TabArrows = styled.div`
  width: 32px;
  height: 15px;
  display: flex;
  align-items: center;
  gap: 6px;
  padding-left: 2px;
  background: #e9e9e9;
`

const PanelTab = styled.div`
  position: relative;
  z-index: 0;
  width: ${(p) => p.$w}px;
  height: 16px;
  flex: none;
  padding-left: ${(p) => p.$pad}px;
  font-weight: ${(p) => (p.$active ? 700 : 400)};
  &::before, &::after {
    content: '';
    position: absolute;
    z-index: -1;
    inset: 0 -2px 0 -1px;
    background: ${(p) => (p.$active ? 'transparent' : '#555')};
    clip-path: polygon(0 0, 100% 0, calc(100% - 6px) 100%, 6px 100%);
  }
  &::after {
    inset: 1px -1px 1px 0;
    background: ${(p) => (p.$active ? 'transparent' : '#f0f0f0')};
  }
`

const EditorBox = styled.div`
  width: 1510px;
  margin-left: 3px;
  display: flex;
  flex-direction: column;
  border-left: 1px solid #9a9a9a;
`

const DocTabs = styled.div`
  height: 30px;
  display: flex;
  gap: 4px;
  padding: 2px 0 0 3px;
  border-top: 1px solid #a5a5a5;
  border-bottom: 1px solid #a5a5a5;
`

const DocTab = styled.div`
  width: ${(p) => p.$w}px;
  height: 23px;
  display: flex;
  align-items: center;
  gap: 4px;
  padding-left: 4px;
  border: 1px solid #a9a9a9;
  border-radius: 2px;
  background: ${(p) => (p.$active ? '#fff' : '#f0f0f0')};
`

const Stage = styled.div`
  height: 872px;
  display: flex;
`

const CanvasArea = styled.div`
  position: relative;
  width: 1492px;
  background: #6e6a69;
`

const LegendText = styled.text`
  fill: #ff0030;
  stroke: #ff0030;
  stroke-width: .5px;
  font: 23px 'DejaVu Sans Mono', monospace;
  letter-spacing: ${(p) => p.$gap};
`

const RoomText = styled.text`
  fill: #fff;
  font: 11px ${sans};
`

const Hud = styled.div`
  position: absolute;
  left: 0;
  top: 0;
  width: 152px;
  height: 64px;
  padding: 4px 0 0 3px;
  border: 2px solid #4f4c4b;
  background: linear-gradient(#524f4e, #5a6a75);
  font-family: ${sans};
  font-weight: 700;
  color: #b4b392;
`

const HudBig = styled.div`
  height: 15px;
  display: flex;
  gap: 5px;
  font-size: 13.5px;
  line-height: 15px;
`

const HudKey = styled.span`
  width: 15px;
`

const HudSmall = styled.div`
  height: 12px;
  padding-left: 1px;
  font-size: 11px;
  line-height: 12px;
  color: ${(p) => (p.$light ? '#cbd0d3' : 'inherit')};
`

const VScroll = styled.div`
  width: 17px;
  display: flex;
  flex-direction: column;
  align-items: center;
  padding: 4px 1px 4px 0;
  border-left: 1px solid #fff;
`

const HScroll = styled.div`
  height: 17px;
  display: flex;
  align-items: center;
  padding: 0 20px 1px 3px;
  border-top: 1px solid #fff;
`

const Thumb = styled.div`
  width: ${(p) => p.$w}px;
  height: ${(p) => p.$h}px;
  margin-left: ${(p) => p.$ml ?? 0}px;
  background: #cdcdcd;
`

const ThumbGap = styled.div`
  height: 39px;
`

const Spacer = styled.div`
  flex: 1;
`

const LayerBar = styled.div`
  height: 19px;
  display: flex;
`

const LayerSet = styled.div`
  width: 46px;
  height: 15px;
  margin: 3px 6px 0 3px;
  display: flex;
  border: 1px solid #777;
  i { width: 25px; background: #f00; border-right: 1px solid #777; }
  b { padding-left: 4px; font: 12px/14px ${sans}; color: #777; }
`

const ActiveLayer = styled.div`
  width: 90px;
  height: 19px;
  flex: none;
  display: flex;
  align-items: center;
  gap: 4px;
  padding-left: 8px;
  font-weight: 700;
  background: linear-gradient(78deg, transparent 4px, #666 4px 5px, transparent 5px);
`

const Swatch = styled.i`
  width: 10px;
  height: 10px;
  flex: none;
  border: 1px solid #8f8f8f;
  background: ${(p) => p.$c};
`

const LayerTab = styled.div`
  position: relative;
  z-index: 0;
  width: ${(p) => p.$w}px;
  height: 19px;
  flex: none;
  display: flex;
  align-items: center;
  gap: 4px;
  padding-left: 4px;
  border-top: 1px solid #9a9a9a;
  &::before, &::after {
    content: '';
    position: absolute;
    z-index: -1;
    inset: 0 -1px 0 0;
    background: #666;
    clip-path: polygon(0 0, 100% 0, calc(100% - 5px) 100%, 3px 100%);
  }
  &::after {
    inset: 0 0 1px 1px;
    background: #fff;
  }
`

const LayerRest = styled.div`
  flex: 1;
  border-top: 1px solid #9a9a9a;
`

const MaskButton = styled.div`
  width: ${(p) => p.$w}px;
  height: 19px;
  display: flex;
  align-items: center;
  justify-content: center;
  border: 1px solid #cfcfcf;
  color: #6d6d6d;
`

const DockTabs = styled.div`
  width: 28px;
  display: flex;
  flex-direction: column;
  gap: 2px;
  padding: 1px 0 0 3px;
`

const DockTab = styled.div`
  width: 21px;
  height: ${(p) => p.$h}px;
  padding-top: 3px;
  border: 1px solid #dedede;
  background: #fafafa;
  color: #5f6184;
  writing-mode: vertical-rl;
  font: 11px/19px ${ui};
`

const StatusBar = styled.div`
  height: 25px;
  display: flex;
  align-items: center;
  padding: 0 5px 0 4px;
  border-top: 1px solid #696969;
  box-shadow: inset 0 1px #b5b5b5;
`

const StatusText = styled.div`
  width: ${(p) => p.$w}px;
  flex: none;
`

const StatusSep = styled.i`
  width: 1px;
  height: 18px;
  margin-right: 5px;
  background: #a0a0a0;
`

const StatusButtons = styled.div`
  display: flex;
  margin-right: 4px;
  border-left: 1px solid #d0d0d0;
`

const StatusButton = styled.div`
  width: ${(p) => p.$w}px;
  height: 18px;
  display: flex;
  align-items: center;
  justify-content: center;
  border: 1px solid #d0d0d0;
  border-left: 0;
  background: #fbfbfb;
  color: #6d6d6d;
`

const MoreButton = styled.div`
  width: 18px;
  height: 18px;
  border: 1px solid #d0d0d0;
  background: #fbfbfb;
  color: #8b8b9b;
  text-align: center;
  line-height: 17px;
`

const TaskBar = styled.div`
  height: 40px;
  display: flex;
  background: linear-gradient(90deg, #23271f 0, #23291f 110px, #20333d 190px, #21343f 500px, #212e2b 570px, #20343e 640px,
    #222e2b 740px, #25281f 800px, #1f2b1f 855px, #20333c 890px, #233a42 1100px, #21363d 1350px, #222c2c 1500px, #20241f 1620px, #212121 1800px);
`

const Task = styled.div`
  width: ${(p) => p.$w}px;
  display: flex;
  align-items: center;
  justify-content: center;
  background: ${(p) => (p.$active ? '#4b5c66' : 'transparent')};
  ${(p) => p.$bar && css`
    background-image: linear-gradient(#76b9ed, #76b9ed);
    background-size: ${p.$active ? '100%' : '40px'} 2px;
    background-position: bottom center;
    background-repeat: no-repeat;
  `}
`

const TraySlot = styled.div`
  width: ${(p) => p.$w}px;
  display: flex;
  align-items: center;
  justify-content: center;
`

const Ime = styled.div`
  width: 20px;
  margin-right: 12px;
  color: #fff;
  font: 16px/38px 'Noto Sans CJK SC', sans-serif;
`

const ImeBox = styled.div`
  width: 15px;
  height: 15px;
  margin-top: 12px;
  background: #fff;
  color: #000;
  font: 12px/14px 'Noto Sans CJK SC', sans-serif;
  text-align: center;
`

const Clock = styled.div`
  width: 94px;
  display: flex;
  flex-direction: column;
  align-items: center;
  padding-top: 1px;
  color: #fff;
  font: 12px/19px ${ui};
`

const Notice = styled.div`
  position: relative;
  width: 38px;
  padding: 11px 0 0 1px;
`

const Watermark = styled.div`
  position: absolute;
  right: 11px;
  top: 15px;
  color: rgba(170, 170, 170, .75);
  font: 11px/16px ${ui};
`

const DesktopEdge = styled.i`
  width: 4px;
  border-left: 1px solid #6b6b6b;
`
